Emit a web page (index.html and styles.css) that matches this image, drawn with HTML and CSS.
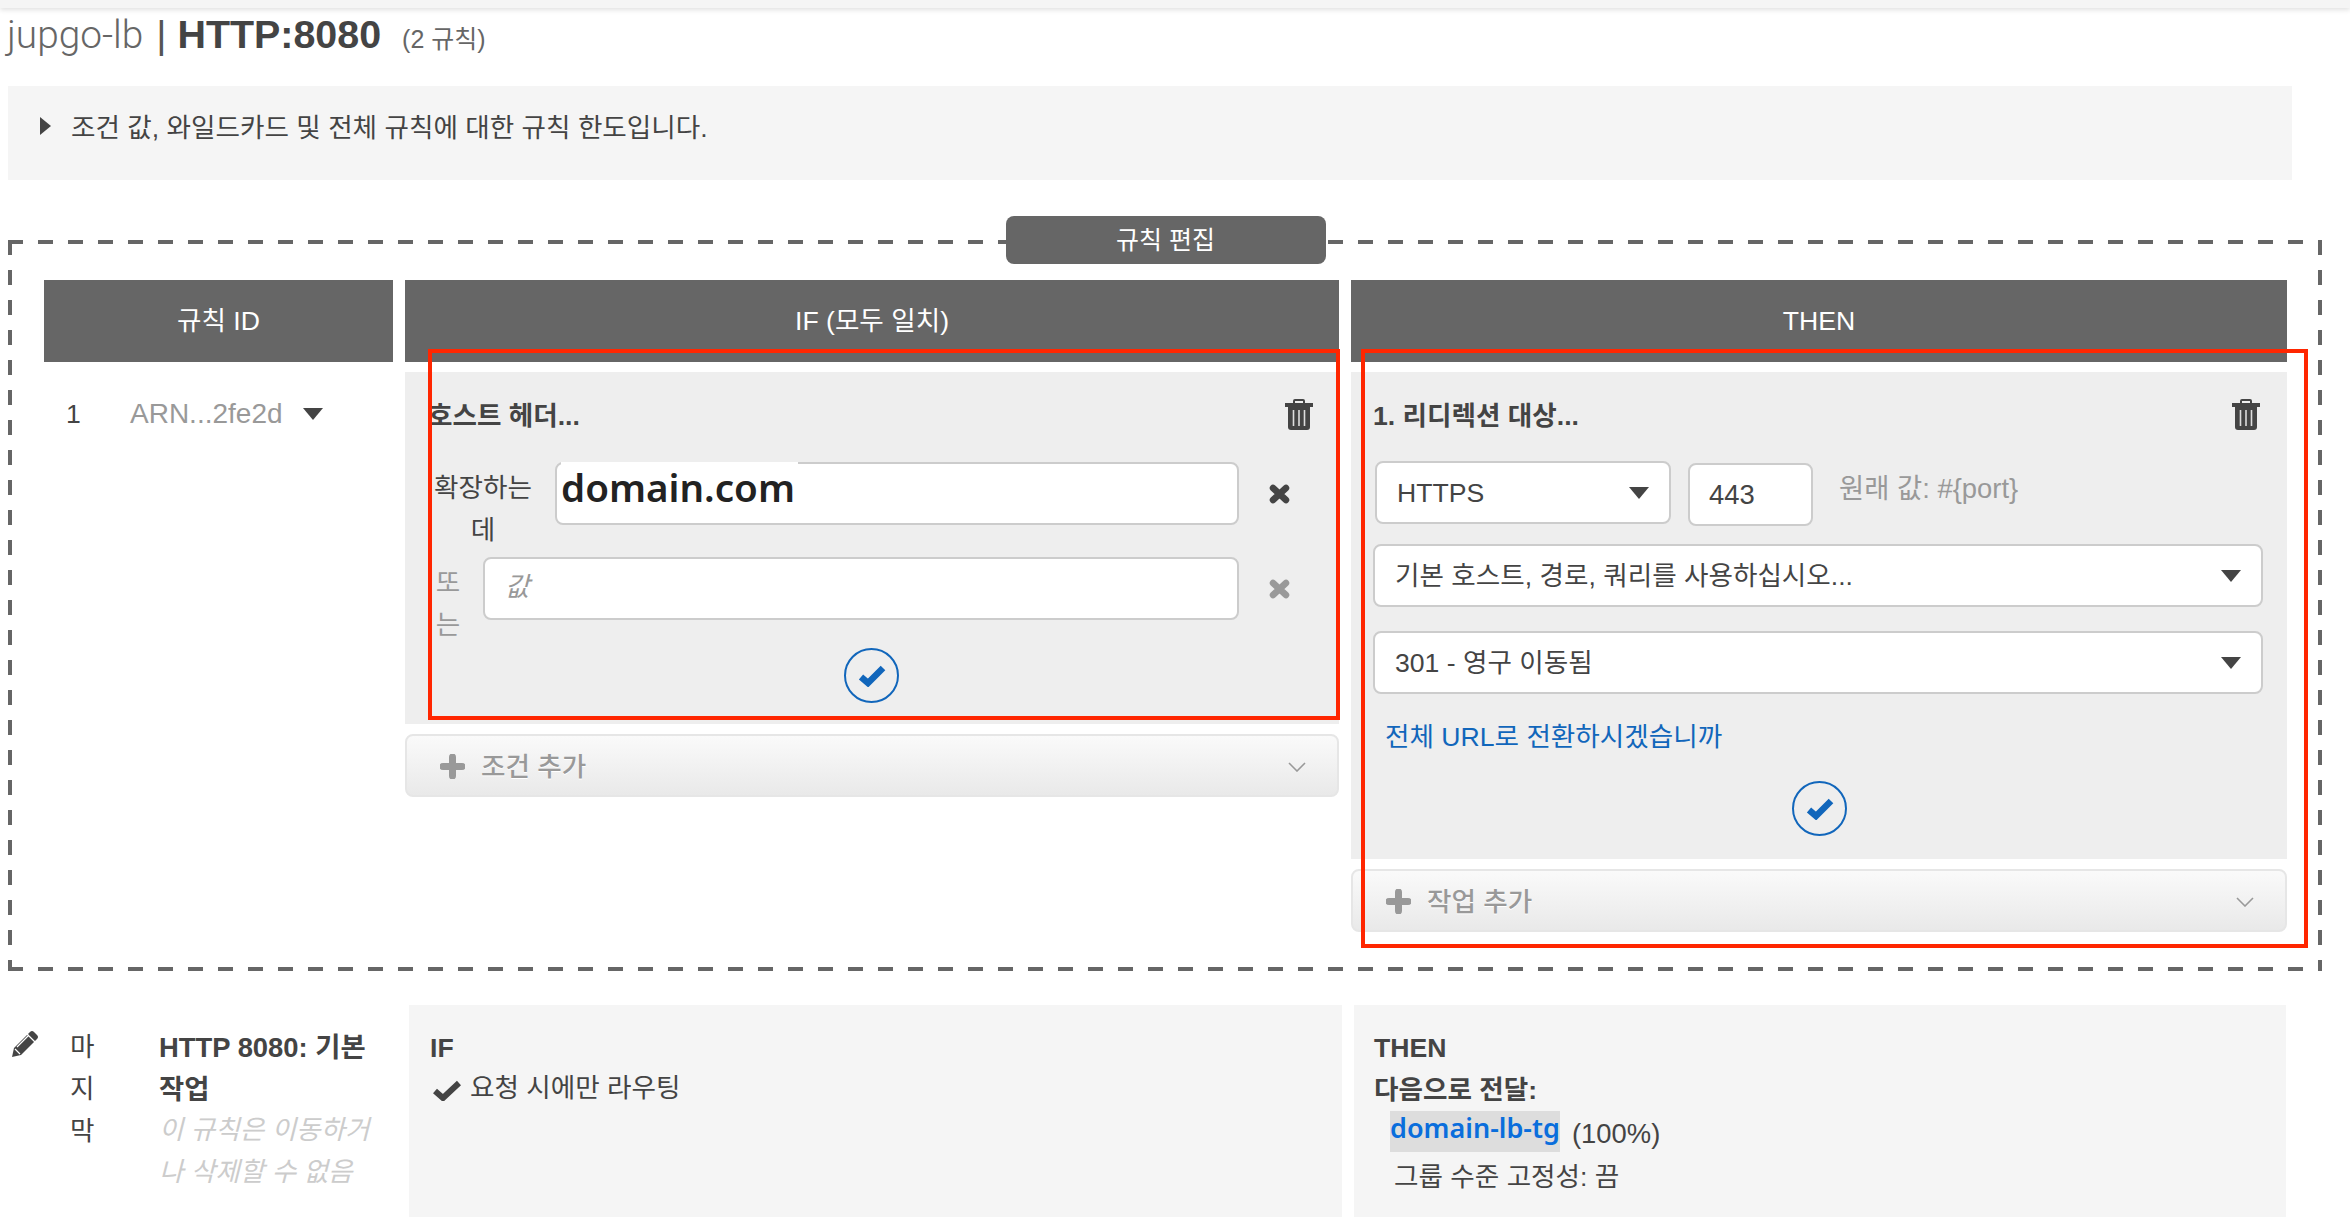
FILE: index.html
```html
<!DOCTYPE html>
<html>
<head>
	<title>HTTP:8080 rules</title>
	<link rel="stylesheet" href="styles.css">
</head>
<body>

	<div class="top-bar"></div>

	<h1 class="page-title">
		<span class="lb-name">jupgo-lb</span> <span class="sep">|</span> <b>HTTP:8080</b><span class="rule-count">(2 규칙)</span>
	</h1>

	<div class="info-box">
		<i class="tri-right"></i>
		<span>조건 값, 와일드카드 및 전체 규칙에 대한 규칙 한도입니다.</span>
	</div>

	<!-- rule being edited -->
	<section class="edit-box">
		<div class="edit-label">규칙 편집</div>
		<div class="rule-grid">

			<div class="col">
				<div class="col-head">규칙 ID</div>
				<div class="rule-id">
					<span class="rule-num">1</span>
					<span class="rule-arn">ARN...2fe2d</span>
					<i class="caret"></i>
				</div>
			</div>

			<div class="col">
				<div class="col-head">IF (모두 일치)</div>
				<div class="panel panel-if">
					<div class="panel-title">
						<span>호스트 헤더...</span>
						<svg class="icon-trash" viewBox="0 0 28 31"><use href="#trash"/></svg>
					</div>
					<div class="cond-row">
						<div class="cond-label cond-label-wide">확장하는 데</div>
						<div class="field"><div class="pasted">domain.com</div></div>
						<div class="cond-del"><svg class="icon-x" viewBox="0 0 21 20"><path d="M4 4L17 16M17 4L4 16"/></svg></div>
					</div>
					<div class="cond-row cond-row-or">
						<div class="cond-label cond-label-or">또는</div>
						<div class="field field-empty">값</div>
						<div class="cond-del"><svg class="icon-x icon-x-off" viewBox="0 0 21 20"><path d="M4 4L17 16M17 4L4 16"/></svg></div>
					</div>
					<div class="confirm confirm-if"><svg viewBox="0 0 28 22"><path d="M3 12L10 18L25 3"/></svg></div>
				</div>
				<div class="add-btn">
					<svg class="icon-plus" viewBox="0 0 25 25"><path d="M12.5 3V22M3 12.5H22"/></svg>
					<span>조건 추가</span>
					<svg class="icon-chevron" viewBox="0 0 18 10"><path d="M1 1L9 9L17 1"/></svg>
				</div>
				<div class="red-mark red-mark-if"></div>
			</div>

			<div class="col">
				<div class="col-head">THEN</div>
				<div class="panel panel-then">
					<div class="panel-title">
						<span>1. 리디렉션 대상...</span>
						<svg class="icon-trash" viewBox="0 0 28 31"><use href="#trash"/></svg>
					</div>
					<div class="proto-row">
						<div class="select select-proto"><span>HTTPS</span><i class="caret"></i></div>
						<div class="field-port">443</div>
						<div class="hint">원래 값: #{port}</div>
					</div>
					<div class="select select-host"><span>기본 호스트, 경로, 쿼리를 사용하십시오...</span><i class="caret"></i></div>
					<div class="select select-code"><span>301 - 영구 이동됨</span><i class="caret"></i></div>
					<a class="url-link" href="#">전체 URL로 전환하시겠습니까</a>
					<div class="confirm confirm-then"><svg viewBox="0 0 28 22"><path d="M3 12L10 18L25 3"/></svg></div>
				</div>
				<div class="add-btn">
					<svg class="icon-plus" viewBox="0 0 25 25"><path d="M12.5 3V22M3 12.5H22"/></svg>
					<span>작업 추가</span>
					<svg class="icon-chevron" viewBox="0 0 18 10"><path d="M1 1L9 9L17 1"/></svg>
				</div>
				<div class="red-mark red-mark-then"></div>
			</div>

		</div>
	</section>

	<!-- default rule -->
	<section class="last-rule">
		<div class="last-edit">
			<svg class="icon-pencil" viewBox="0 0 27 27">
				<path d="M0 27L2 18L18 2Q20 0 22 2L25 5Q27 7 25 9L9 25Z"/>
				<path class="pencil-line" d="M3 19L8 24M5 17L17 5M15 4L23 12"/>
			</svg>
		</div>
		<div class="last-label">마지막</div>
		<div class="last-name">
			<b>HTTP 8080: 기본 작업</b>
			<em>이 규칙은 이동하거나 삭제할 수 없음</em>
		</div>
		<div class="last-cell">
			<b>IF</b>
			<div class="last-check">
				<svg class="icon-check" viewBox="0 0 28 21"><path d="M2 11L10 18L26 3"/></svg>
				<span>요청 시에만 라우팅</span>
			</div>
		</div>
		<div class="last-cell last-then">
			<b>THEN</b>
			<b>다음으로 전달:</b>
			<div class="target-row">
				<a class="target" href="#">domain-lb-tg</a>
				<span class="target-pct">(100%)</span>
			</div>
			<div class="sticky">그룹 수준 고정성: 끔</div>
		</div>
	</section>

	<svg class="defs" width="0" height="0">
		<symbol id="trash" viewBox="0 0 28 31">
			<path d="M9 5V2Q9 1 10 1H18Q19 1 19 2V5" fill="none" stroke="#444" stroke-width="2"/>
			<rect x="0" y="4" width="28" height="4" fill="#444"/>
			<path d="M3 8H25V28Q25 31 22 31H6Q3 31 3 28Z" fill="#444"/>
			<path d="M8.5 11V27M14 11V27M19.5 11V27" stroke="#ddd" stroke-width="1.6"/>
		</symbol>
	</svg>

</body>
</html>
```

FILE: styles.css
```css
/* page */
body {
	margin: 0;
	font-family: "Liberation Sans", "Noto Sans CJK KR", sans-serif;
	font-size: 26.6px;
	line-height: 42px;
	color: #444;
	background-color: #fff;
}

a {
	text-decoration: none;
}

.defs {
	position: absolute;
}

.top-bar {
	height: 8px;
	background-color: #f5f5f5;
	box-shadow: 0 2px 5px rgba(0,0,0,0.12);
}

/* title */
.page-title {
	margin: 0;
	padding: 4px 0 0 7px;
	height: 78px;
	box-sizing: border-box;
	font-size: 39.4px;
	font-weight: normal;
	line-height: 44px;
	white-space: nowrap;
}

.page-title b {
	color: #444;
}

.lb-name {
	font-family: Roboto, sans-serif;
	font-size: 38.8px;
	font-weight: 300;
	color: #666;
}

.sep {
	margin-left: 2px;
	color: #555;
	font-weight: 300;
}

.rule-count {
	margin-left: 21px;
	font-size: 25px;
	color: #666;
}

.info-box {
	margin-left: 8px;
	width: 2284px;
	height: 94px;
	box-sizing: border-box;
	padding: 21px 0 0 32px;
	display: flex;
	align-items: flex-start;
	background-color: #f5f5f5;
}

.tri-right {
	margin-top: 10px;
	margin-right: 20px;
	border-left: 11px solid #444;
	border-top: 9px solid transparent;
	border-bottom: 9px solid transparent;
}

/* dashed box, 15px dash and 15px gap */
.edit-box {
	display: flow-root;
	margin: 60px 0 0 8px;
	width: 2314px;
	box-sizing: border-box;
	padding: 0 35px 39px 36px;
	background-image:
		repeating-linear-gradient(90deg, #666 0 15px, transparent 15px 30px),
		repeating-linear-gradient(90deg, #666 0 15px, transparent 15px 30px),
		repeating-linear-gradient(180deg, #666 0 15px, transparent 15px 30px),
		repeating-linear-gradient(180deg, #666 0 15px, transparent 15px 30px);
	background-size: 100% 4px, 100% 4px, 4px 100%, 4px 100%;
	background-position: 0 0, 0 100%, 0 0, 100% 0;
	background-repeat: no-repeat;
}

.edit-label {
	margin: -24px auto 16px;
	width: 320px;
	height: 48px;
	background-color: #666;
	border-radius: 8px;
	color: #fff;
	font-size: 25px;
	text-align: center;
	line-height: 48px;
}

.rule-grid {
	display: grid;
	grid-template-columns: 349px 934px 936px;
	column-gap: 12px;
}

.col {
	position: relative;
}

.col-head {
	height: 82px;
	line-height: 82px;
	background-color: #666;
	color: #fff;
	text-align: center;
}

.red-mark {
	position: absolute;
	box-sizing: border-box;
	border: 4px solid #ff2600;
}

.red-mark-if {
	left: 23px;
	top: 69px;
	width: 912px;
	height: 371px;
}

.red-mark-then {
	left: 10px;
	top: 69px;
	width: 947px;
	height: 599px;
}

/* rule id column */
.rule-id {
	display: flex;
	align-items: center;
	margin-top: 31px;
	padding-left: 22px;
	color: #999;
}

.rule-num {
	width: 64px;
	color: #444;
}

.rule-arn {
	margin-right: 20px;
	font-size: 28px;
}

.caret {
	display: block;
	border-top: 12px solid #444;
	border-left: 10px solid transparent;
	border-right: 10px solid transparent;
}

/* panels */
.panel {
	margin-top: 10px;
	background-color: #eee;
}

.panel-if {
	height: 352px;
	box-sizing: border-box;
	padding: 26px 19px 0 23px;
}

.panel-then {
	height: 487px;
	box-sizing: border-box;
	padding: 26px 24px 0 22px;
}

.panel-title {
	display: flex;
	justify-content: space-between;
	align-items: center;
	height: 36px;
	font-weight: bold;
}

.icon-trash {
	width: 28px;
	height: 31px;
	margin-right: 7px;
	margin-top: -3px;
}

.panel-then .icon-trash {
	margin-right: 3px;
}

/* conditions */
.cond-row {
	display: flex;
	margin-top: 28px;
}

.cond-row-or {
	margin-top: 6px;
}

.cond-label {
	padding-top: 5px;
	text-align: center;
	margin-left: 5px;
}

.cond-label-wide {
	width: 100px;
	margin-right: 22px;
}

.cond-label-or {
	width: 30px;
	margin-right: 20px;
	color: #999;
}

.field {
	flex: 1;
	height: 63px;
	box-sizing: border-box;
	border: 2px solid #ccc;
	border-radius: 8px;
	background-color: #fff;
}

.field-empty {
	padding-left: 20px;
	line-height: 57px;
	font-style: italic;
	color: #999;
}

.pasted {
	display: inline-block;
	margin: -2px 0 0 4px;
	padding-right: 3px;
	height: 52px;
	background-color: #fff;
	font-family: "Noto Sans", sans-serif;
	font-size: 38.6px;
	font-weight: 600;
	line-height: 50px;
	color: #222;
}

.cond-del {
	width: 81px;
	height: 63px;
	display: flex;
	align-items: center;
	justify-content: center;
}

.icon-x {
	width: 21px;
	height: 20px;
	fill: none;
	stroke: #444;
	stroke-width: 6.5;
	stroke-linecap: round;
}

.icon-x-off {
	stroke: #999;
}

.confirm {
	width: 55px;
	height: 55px;
	box-sizing: border-box;
	border: 2px solid #1166bb;
	border-radius: 50%;
	display: flex;
	align-items: center;
	justify-content: center;
}

.confirm svg {
	width: 28px;
	height: 22px;
	fill: none;
	stroke: #1166bb;
	stroke-width: 6.5;
}

.confirm-if {
	margin: 2px 0 0 416px;
}

.confirm-then {
	margin: 23px 0 0 419px;
}

.add-btn {
	margin-top: 10px;
	height: 63px;
	box-sizing: border-box;
	padding: 2px 31px 0 33px;
	display: flex;
	align-items: center;
	border: 2px solid #e6e6e6;
	border-radius: 8px;
	background: linear-gradient(#fafafa, #e9e9e9);
	color: #999;
	font-weight: 500;
	text-shadow: 0 1px 0 #fff;
}

.add-btn span {
	flex: 1;
	margin-left: 16px;
}

.icon-plus {
	width: 25px;
	height: 25px;
	fill: none;
	stroke: #999;
	stroke-width: 7;
	stroke-linecap: round;
}

.icon-chevron {
	width: 18px;
	height: 10px;
	fill: none;
	stroke: #999;
	stroke-width: 1.6;
}

/* redirect action */
.proto-row {
	display: flex;
	margin-top: 27px;
	margin-left: 2px;
}

.select {
	height: 63px;
	box-sizing: border-box;
	padding: 0 20px;
	display: flex;
	align-items: center;
	justify-content: space-between;
	border: 2px solid #ccc;
	border-radius: 8px;
	background-color: #fff;
}

.select-proto {
	width: 296px;
}

.select-host {
	margin-top: 18px;
}

.select-code {
	margin-top: 24px;
}

.field-port {
	width: 125px;
	height: 63px;
	box-sizing: border-box;
	margin: 2px 0 0 17px;
	padding-left: 19px;
	border: 2px solid #ccc;
	border-radius: 8px;
	background-color: #fff;
	font-size: 27.4px;
	line-height: 59px;
}

.hint {
	margin: 7px 0 0 26px;
	font-size: 27.4px;
	color: #999;
}

.url-link {
	display: block;
	margin: 22px 0 0 12px;
	color: #1166bb;
}

/* default rule row */
.last-rule {
	display: grid;
	grid-template-columns: 58px 89px 250px 933px 944px;
	column-gap: 0;
	margin-top: 34px;
	padding-left: 12px;
	height: 212px;
}

.icon-pencil {
	display: block;
	width: 27px;
	height: 27px;
	margin-top: 25px;
	fill: #444;
}

.pencil-line {
	fill: none;
	stroke: #fff;
	stroke-width: 1.2;
}

.last-label {
	width: 28px;
	padding-top: 21px;
}

.last-name {
	width: 216px;
	padding-top: 22px;
}

.last-name b,
.last-name em {
	display: block;
}

.last-name b {
	font-size: 27.4px;
}

.last-name em {
	margin-top: -2px;
	color: #ccc;
}

.last-cell {
	padding: 22px 0 0 21px;
	background-color: #f5f5f5;
}

.last-cell b {
	display: block;
}

.last-check {
	margin-top: -2px;
	display: flex;
	align-items: center;
}

.icon-check {
	width: 28px;
	height: 21px;
	margin: 4px 9px 0 3px;
	fill: none;
	stroke: #444;
	stroke-width: 6;
}

.last-then {
	margin-left: 12px;
	padding-left: 20px;
}

.target-row {
	display: flex;
	margin: 0 0 0 16px;
}

.target {
	height: 41px;
	width: 170px;
	background-color: #ddd;
	color: #0a6edc;
	font-family: "Noto Sans", sans-serif;
	font-size: 27px;
	font-weight: 600;
	line-height: 34px;
	white-space: nowrap;
}

.target-pct {
	margin: 2px 0 0 12px;
	font-size: 27.4px;
}

.sticky {
	margin: 1px 0 0 20px;
}
```
